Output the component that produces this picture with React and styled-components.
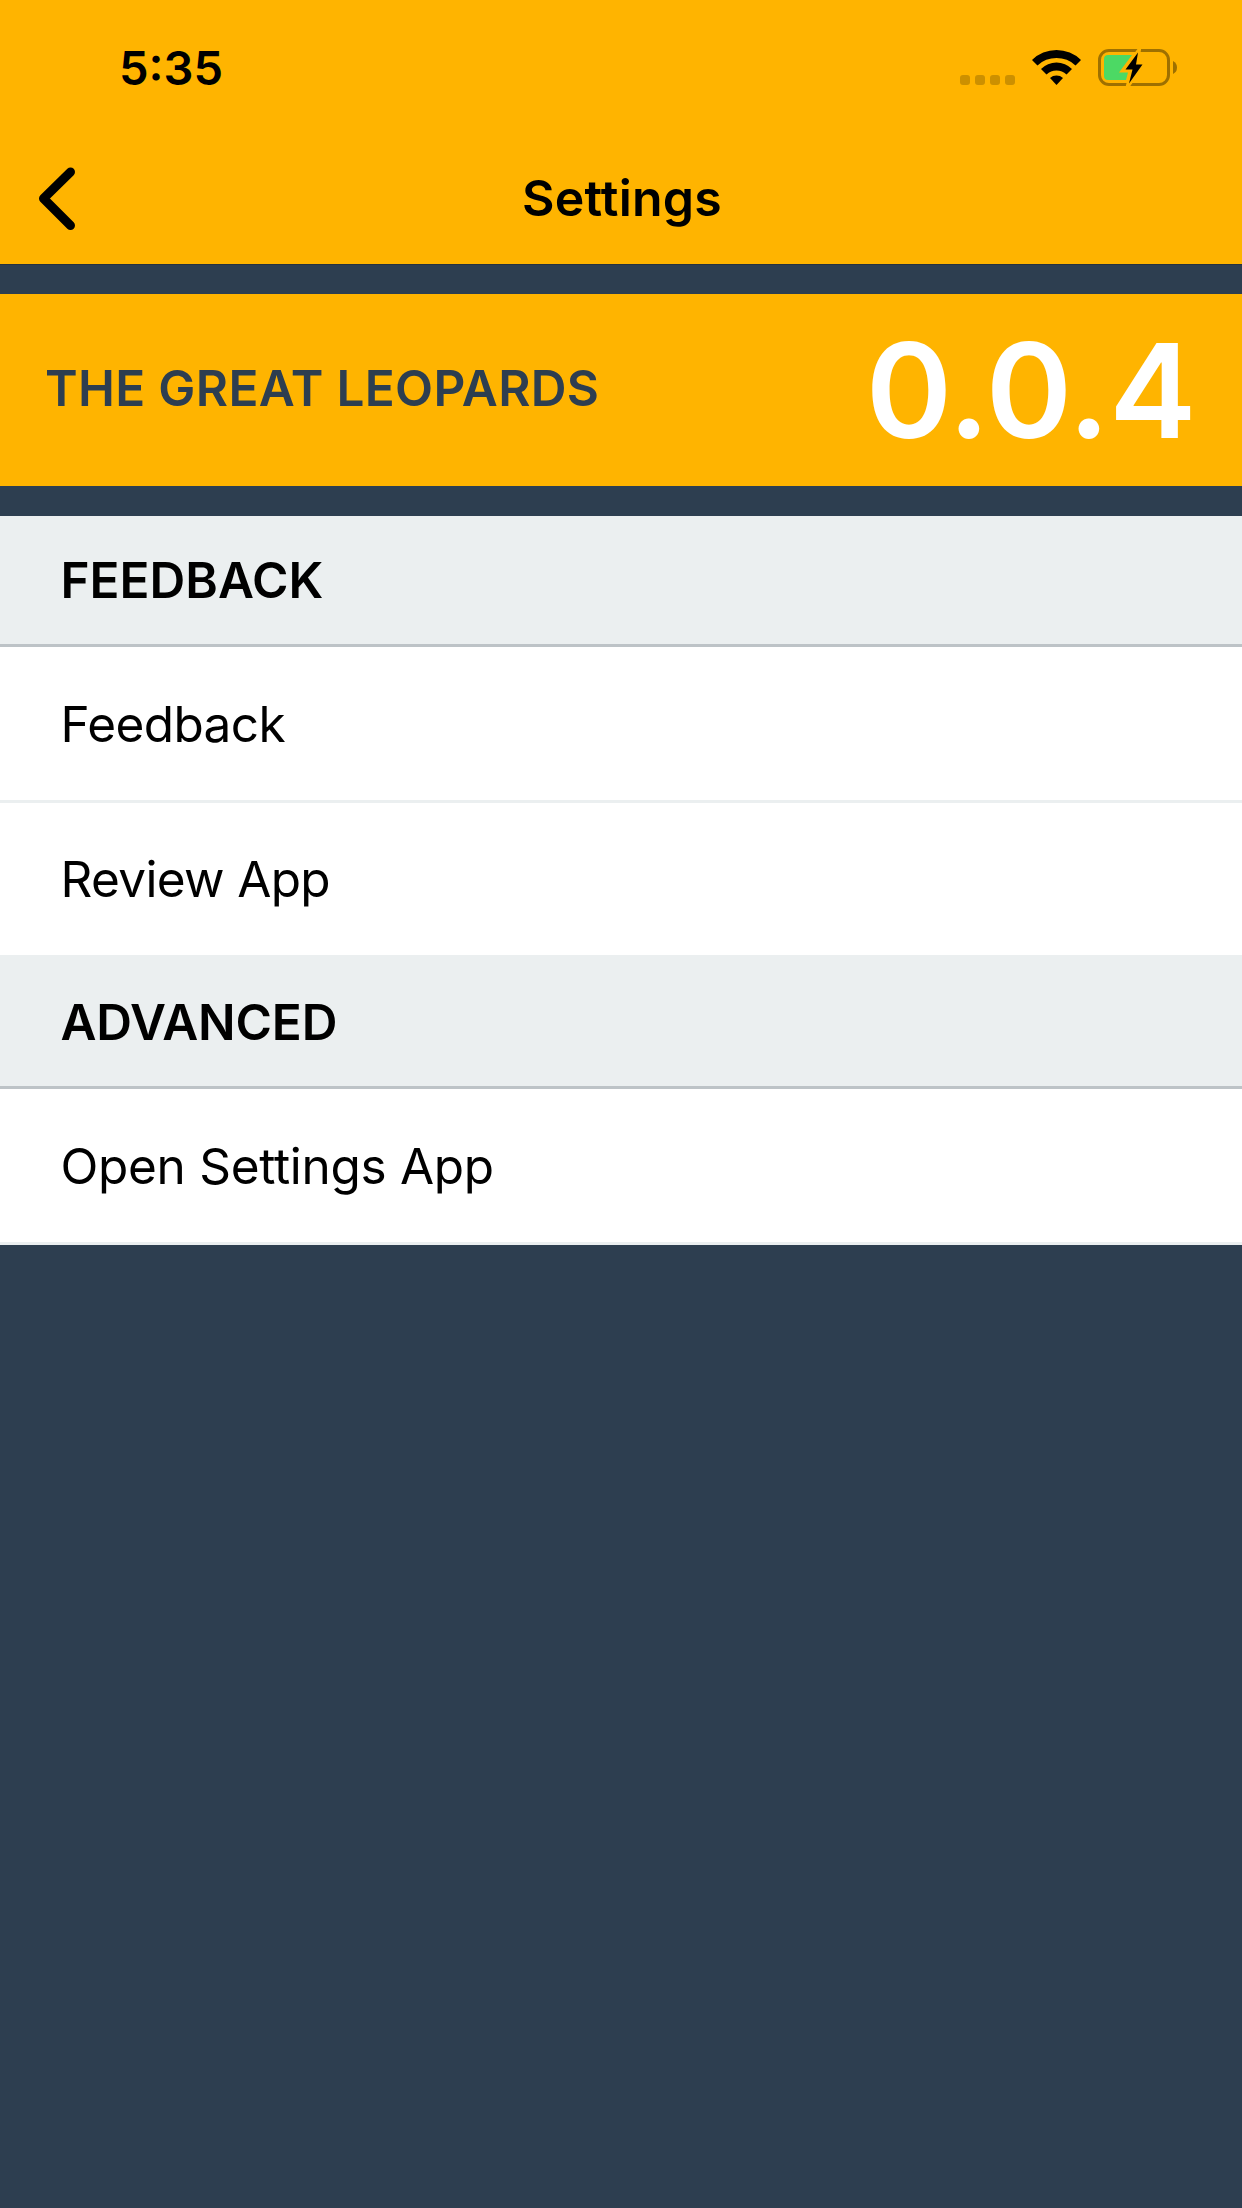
import React from "react";
import styled, { createGlobalStyle } from "styled-components";

const GlobalStyle = createGlobalStyle`
  * { box-sizing: border-box; }
  body { margin: 0; background: #2d3e50; }
`;

const Screen = styled.div`
  display: flex;
  flex-direction: column;
  width: 1242px;
  height: 2208px;
  background: #2d3e50;
  color: #000;
  font-family: Inter, "Liberation Sans", sans-serif;
`;

const TopBar = styled.header`
  display: flex;
  flex-direction: column;
  height: 265px;
  background: #ffb400;
  border-bottom: 1px solid #26323f;
`;

const StatusBar = styled.div`
  display: flex;
  justify-content: space-between;
  height: 132px;
  padding: 38px 64px 0 119px;
`;

const Time = styled.div`
  height: 60px;
  font-size: 47px;
  font-weight: 600;
  line-height: 60px;
`;

const StatusIcons = styled.div`
  display: flex;
  align-items: flex-start;
  padding-top: 11px;
`;

const NavBar = styled.nav`
  display: grid;
  grid-template-columns: 201px 1fr 199px;
  align-items: center;
  height: 132px;
`;

const BackButton = styled.button`
  display: flex;
  width: 100px;
  height: 132px;
  padding: 35px 0 0 38px;
  border: 0;
  background: none;
`;

const Title = styled.h1`
  margin: 0;
  text-align: center;
  font-size: 50px;
  font-weight: 600;
  line-height: 60px;
  letter-spacing: 0.2px;
`;

const Banner = styled.section`
  display: flex;
  justify-content: space-between;
  align-items: flex-start;
  height: 192px;
  margin: 29px 0 30px;
  padding: 0 46px 0 45px;
  background: #ffb400;
`;

const TeamName = styled.div`
  padding-top: 64px;
  color: #2d3e50;
  font-size: 49.5px;
  font-weight: 600;
  line-height: 60px;
  letter-spacing: 0.33px;
`;

const Version = styled.div`
  padding-top: 17px;
  color: #fff;
  font-size: 131px;
  font-weight: 600;
  line-height: 160px;
  letter-spacing: -0.5px;
`;

const SectionHeader = styled.h2`
  height: 131px;
  margin: 0;
  padding: 34px 0 0 60.5px;
  background: #ebeff0;
  border-bottom: 3px solid #bdc3c7;
  font-size: 49.5px;
  font-weight: 600;
  line-height: 60px;
  letter-spacing: ${(p) => p.$spacing || "normal"};
`;

const Row = styled.div`
  height: ${(p) => p.$height || 156}px;
  padding: ${(p) => (p.$height ? 46 : 47)}px 0 0 60.5px;
  background: #fff;
  border-bottom: 3px solid #ebeff0;
  font-size: 49.5px;
  line-height: 60px;
  letter-spacing: ${(p) => p.$spacing || "normal"};
`;

const SignalDots = () => (
  <svg width="56" height="37" viewBox="0 0 56 37" fill="#cc9000">
    {[0, 15, 30, 45].map((x) => (
      <rect key={x} x={x} y="26" width="10" height="10" rx="3" />
    ))}
  </svg>
);

const WifiIcon = styled.svg`
  margin-left: 16px;
`;

const BatteryIcon = styled.svg`
  margin-left: 17px;
`;

export default function App() {
  return (
    <Screen>
      <GlobalStyle />
      <TopBar>
        <StatusBar>
          <Time>5:35</Time>
          <StatusIcons>
            <SignalDots />
            <WifiIcon width="49" height="37" viewBox="0 0 49 37">
              <path d="M0 11 A35 35 0 0 1 49 11 L43.500 16.500 A27.500 27.500 0 0 0 5.500 16.500 Z" />
              <path d="M9 20 A22 22 0 0 1 40 20 L34.500 25.500 A14.500 14.500 0 0 0 14.500 25.500 Z" />
              <path d="M18 29 A10 10 0 0 1 31 29 L24.500 36 Z" />
            </WifiIcon>
            <BatteryIcon width="80" height="37" viewBox="0 0 80 37">
              <rect x="1.5" y="1.5" width="69" height="34" rx="9.500" fill="none" stroke="#9e7000" strokeWidth="3" />
              <path d="M75 12 Q79 14 79 18.500 Q79 23 75 25 Z" fill="#9e7000" />
              <path d="M10 6 H34 L21 23.500 H30 L28 31 H10 Q6 31 6 27 V10 Q6 6 10 6Z" fill="#4cd964" />
              <path d="M40 3.500 L27.500 20.500 H34.500 L31 34.500 L44.500 15.500 H38 Z" stroke="#ffb400" strokeWidth="5" strokeMiterlimit="10" />
              <path d="M40 3.500 L27.500 20.500 H34.500 L31 34.500 L44.500 15.500 H38 Z" />
            </BatteryIcon>
          </StatusIcons>
        </StatusBar>
        <NavBar>
          <BackButton aria-label="Back">
            <svg width="38" height="64" viewBox="0 0 38 64" fill="none" stroke="#000" strokeWidth="9" strokeLinecap="round" strokeLinejoin="round">
              <path d="M32.500 5 L5.500 31.500 L32.500 58.500" />
            </svg>
          </BackButton>
          <Title>Settings</Title>
        </NavBar>
      </TopBar>
      <Banner>
        <TeamName>THE GREAT LEOPARDS</TeamName>
        <Version>0.0.4</Version>
      </Banner>
      <SectionHeader>FEEDBACK</SectionHeader>
      <Row $spacing="-0.6px">Feedback</Row>
      <Row $height={155} $spacing="-0.65px">Review App</Row>
      <SectionHeader $spacing="-0.15px">ADVANCED</SectionHeader>
      <Row $spacing="-0.3px">Open Settings App</Row>
    </Screen>
  );
}
